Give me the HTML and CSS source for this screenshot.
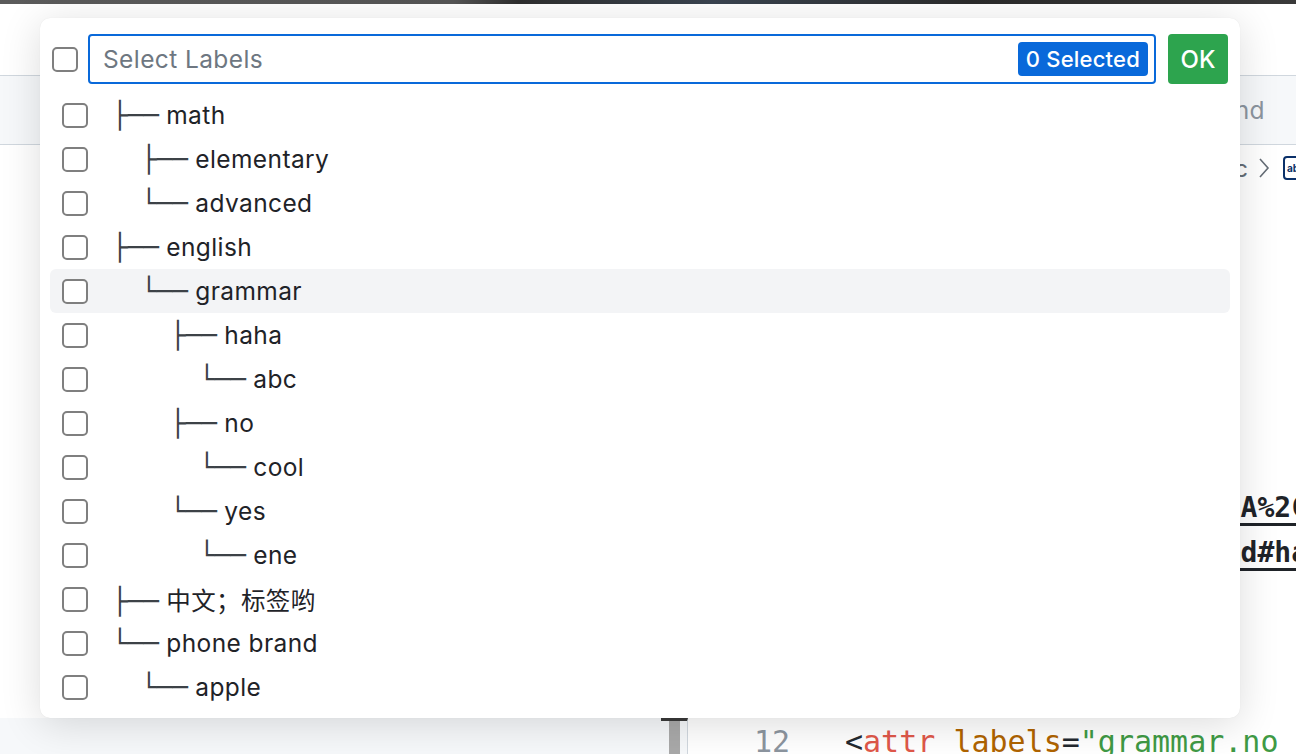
FILE: index.html
```html
<!DOCTYPE html>
<html lang="en">
<head>
<meta charset="utf-8">
<title>Select Labels</title>
<link rel="stylesheet" href="styles.css">
</head>
<body>
<div class="page">
  <div class="chrome"></div>
  <div class="topspace"></div>
  <div class="toolbar"><span class="find">Find</span></div>
  <div class="crumbs">
    <span class="crumb">abc</span>
    <svg class="chev" width="12" height="22" viewBox="0 0 12 22"><path d="M2 2 L10 11 L2 20" fill="none" stroke="#656d76" stroke-width="1.6"/></svg>
    <span class="tagicon">ab</span>
  </div>
  <div class="main">
    <div class="links">
      <a class="link">labels=grammar%2CA%2C</a>
      <a class="link">README.md#ha</a>
    </div>
  </div>
  <div class="codebar">
    <div class="sidepanel"></div>
    <div class="splitter"><span class="grip"></span></div>
    <div class="code">
      <span class="lineno">12</span>
      <span class="src"><span class="p">&lt;</span><span class="tag">attr</span> <span class="attr">labels</span><span class="p">=</span><span class="str">"grammar.no</span></span>
    </div>
  </div>
</div>

<div class="popup">
  <div class="popup-head">
    <span class="cb"></span>
    <div class="search">
      <span class="placeholder">Select Labels</span>
      <span class="badge">0 Selected</span>
    </div>
    <button class="ok">OK</button>
  </div>
  <ul class="tree">
    <li class="row"><span class="cb"></span><span class="label"><span class="branch">├──</span> math</span></li>
    <li class="row"><span class="cb"></span><span class="label l1"><span class="branch">├──</span> elementary</span></li>
    <li class="row"><span class="cb"></span><span class="label l1"><span class="branch">└──</span> advanced</span></li>
    <li class="row"><span class="cb"></span><span class="label"><span class="branch">├──</span> english</span></li>
    <li class="row hover"><span class="cb"></span><span class="label l1"><span class="branch">└──</span> grammar</span></li>
    <li class="row"><span class="cb"></span><span class="label l2"><span class="branch">├──</span> haha</span></li>
    <li class="row"><span class="cb"></span><span class="label l3"><span class="branch">└──</span> abc</span></li>
    <li class="row"><span class="cb"></span><span class="label l2"><span class="branch">├──</span> no</span></li>
    <li class="row"><span class="cb"></span><span class="label l3"><span class="branch">└──</span> cool</span></li>
    <li class="row"><span class="cb"></span><span class="label l2"><span class="branch">└──</span> yes</span></li>
    <li class="row"><span class="cb"></span><span class="label l3"><span class="branch">└──</span> ene</span></li>
    <li class="row"><span class="cb"></span><span class="label"><span class="branch">├──</span> 中文；标签哟</span></li>
    <li class="row"><span class="cb"></span><span class="label"><span class="branch">└──</span> phone brand</span></li>
    <li class="row"><span class="cb"></span><span class="label l1"><span class="branch">└──</span> apple</span></li>
  </ul>
</div>
</body>
</html>
```
FILE: styles.css
```css
* { box-sizing: border-box; }
html, body {
  margin: 0;
  padding: 0;
  width: 1296px;
  height: 754px;
  overflow: hidden;
  background: #ffffff;
  font-family: Inter, "Noto Sans CJK SC", sans-serif;
  color: #1f2328;
}
.page {
  width: 1296px;
  height: 754px;
  display: flex;
  flex-direction: column;
}
.chrome {
  height: 4px;
  flex: none;
  background: linear-gradient(90deg, #5b5b5b 0%, #555 35%, #2e2e2e 40%, #3a4450 55%, #2b2b2b 75%, #3a3a3a 100%);
}
.topspace { height: 71px; flex: none; }
.toolbar {
  height: 70px;
  flex: none;
  background: #f6f8fa;
  border-top: 1px solid #d0d7de;
  border-bottom: 1px solid #d0d7de;
  display: flex;
  justify-content: flex-end;
  align-items: center;
  padding-right: 31px;
}
.find { font-size: 24.5px; letter-spacing: 0.4px; color: #8c959f; }
.crumbs {
  height: 46px;
  flex: none;
  display: flex;
  justify-content: flex-end;
  align-items: center;
  gap: 10px;
  margin-right: -9px;
}
.crumb { font-size: 24px; color: #656d76; }
.chev { margin-right: 3px; }
.tagicon {
  width: 22px;
  height: 24px;
  border: 2px solid #0a3069;
  border-radius: 4px;
  font-size: 10px;
  font-weight: 700;
  color: #0a3069;
  display: flex;
  align-items: center;
  padding-left: 2px;
}
.main { flex: 1; }
.links {
  margin-top: 294px;
  display: flex;
  flex-direction: column;
  align-items: flex-end;
  margin-right: -12px;
}
.link {
  font-family: "DejaVu Sans Mono", monospace;
  font-weight: 700;
  font-size: 28px;
  line-height: 45px;
  color: #1f2328;
  text-decoration: underline;
  text-decoration-thickness: 3px;
  text-underline-offset: 6px;
}
.codebar {
  height: 36px;
  flex: none;
  display: grid;
  grid-template-columns: 661px 27px 1fr;
}
.sidepanel { background: #f6f8fa; }
.splitter {
  border-top: 3px solid #3a3a3a;
  border-right: 1px solid #d0d7de;
  background: #f6f8fa;
  display: flex;
  padding-left: 8px;
}
.grip { width: 11px; background: #a9a9a9; }
.code {
  display: flex;
  padding-top: 6px;
  font-family: "DejaVu Sans Mono", monospace;
  font-size: 30px;
  line-height: 36px;
  white-space: pre;
}
.lineno { width: 102px; text-align: right; color: #8c959f; }
.src { padding-left: 55px; color: #24292f; }
.tag { color: #e0584a; }
.attr { color: #b06400; }
.str { color: #3f9a45; }

/* popup */
.popup {
  position: absolute;
  left: 40px;
  top: 18px;
  width: 1200px;
  height: 700px;
  background: #ffffff;
  border-radius: 10px;
  box-shadow: 0 6px 40px rgba(0, 0, 0, 0.14), 0 0 1px rgba(0, 0, 0, 0.1);
  padding: 16px 10px 9px;
}
.popup-head {
  display: flex;
  align-items: center;
  height: 50px;
  padding: 0 2px;
}
.cb {
  flex: none;
  width: 26px;
  height: 25px;
  border: 2px solid #7f7f7f;
  border-radius: 5px;
  background: #fff;
}
.search {
  flex: 1;
  height: 50px;
  margin-left: 10px;
  border: 2px solid #0969da;
  border-radius: 4px;
  display: flex;
  align-items: center;
  justify-content: space-between;
  padding: 0 6px 0 13px;
}
.placeholder { font-size: 24.5px; letter-spacing: 0.4px; color: #6e7781; }
.badge {
  background: #0969da;
  color: #ffffff;
  font-size: 22px;
  font-weight: 500;
  letter-spacing: 0.2px;
  height: 34px;
  line-height: 34px;
  padding: 0 8px;
  border-radius: 4px;
}
.ok {
  margin-left: 12px;
  width: 60px;
  height: 50px;
  border: none;
  border-radius: 4px;
  background: #2da44e;
  color: #ffffff;
  font-family: Inter, sans-serif;
  font-size: 24px;
  font-weight: 500;
  padding: 0;
}
.tree {
  list-style: none;
  margin: 9px 0 0;
  padding: 0;
}
.row {
  height: 44px;
  display: flex;
  align-items: center;
  padding-left: 12px;
  border-radius: 6px;
}
.row.hover { background: #f3f4f6; }
.row .cb { margin-right: 30px; }
.label {
  font-size: 24.5px;
  letter-spacing: 0.4px;
  color: #1f2328;
  white-space: pre;
}
.label.l1 { padding-left: 29px; }
.label.l2 { padding-left: 58px; }
.label.l3 { padding-left: 87px; }
.branch {
  font-family: "DejaVu Sans Mono", monospace;
  font-size: 26px;
  letter-spacing: 0;
  margin-left: -6px;
  color: #3d4247;
}
```
